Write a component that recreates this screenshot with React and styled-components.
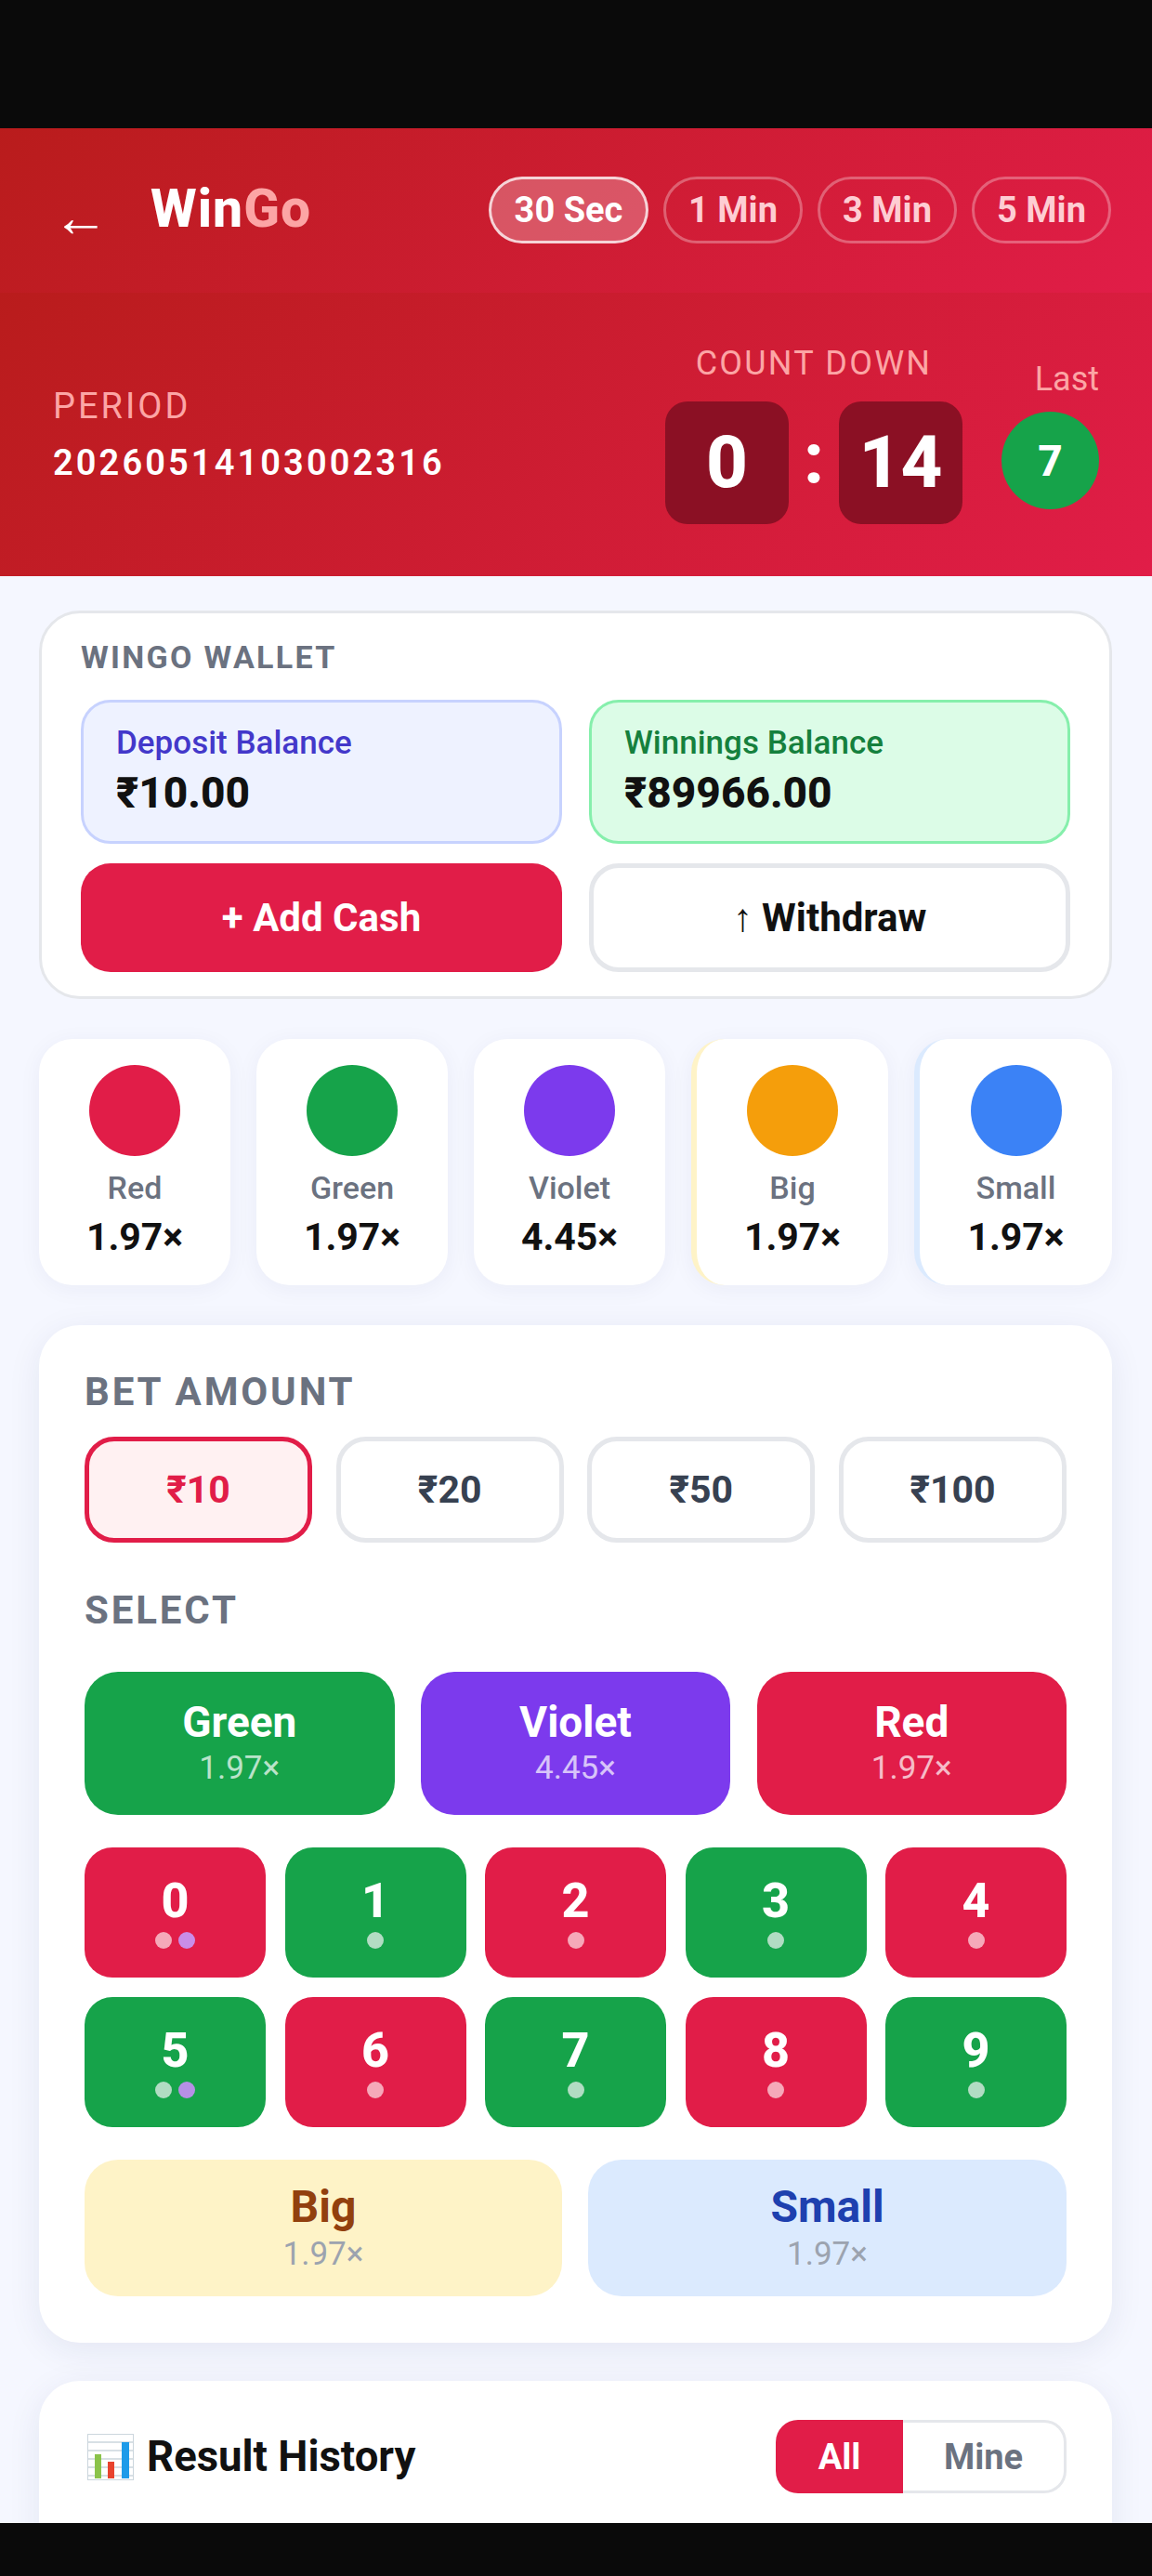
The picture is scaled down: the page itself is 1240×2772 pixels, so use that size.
import React from 'react';
import styled, { createGlobalStyle } from 'styled-components';

const Global = createGlobalStyle`
    html, body {
        margin: 0;
        padding: 0;
        background: #0a0a0a;
    }
    * {
        box-sizing: border-box;
    }
    body {
        font-family: Roboto, 'Noto Sans', sans-serif;
    }
`;

const RED = '#e11d48';
const GREEN = '#16a34a';
const VIOLET = '#7c3aed';

const Screen = styled.div`
    width: 1240px;
    height: 2772px;
    display: flex;
    flex-direction: column;
    overflow: hidden;
    background: #0a0a0a;
`;
const StatusBar = styled.div`
    height: 138px;
    flex: none;
    background: #0a0a0a;
`;
const NavBar = styled.div`
    height: 57px;
    flex: none;
    background: #0a0a0a;
`;
const Page = styled.div`
    flex: 1;
    min-height: 0;
    overflow: hidden;
    background: #f5f7ff;
`;
const TopBar = styled.header`
    height: 177px;
    display: flex;
    align-items: center;
    justify-content: space-between;
    padding: 0 44px 0 57px;
    background: linear-gradient(135deg, #b91c1c, ${RED});
`;
const Brand = styled.div`
    display: flex;
    align-items: center;
    gap: 42px;
    margin-top: -4px;
`;
const Back = styled.span`
    font-family: 'Liberation Sans', sans-serif;
    font-size: 60px;
    line-height: 1;
    color: #fff;
    margin-top: 18px;
    width: 63px;
`;
const Title = styled.h1`
    margin: 0;
    font-size: 57px;
    font-weight: 800;
    letter-spacing: 1px;
    color: #fff;
    span {
        color: #fca5a5;
    }
`;
const Pills = styled.div`
    display: flex;
    gap: 16px;
    margin-top: -2px;
`;
const Pill = styled.button`
    width: ${p => (p.$active ? 172 : 150)}px;
    height: 72px;
    padding: 0;
    border-radius: 36px;
    font-family: inherit;
    font-size: 38px;
    font-weight: 700;
    color: ${p => (p.$active ? '#fff' : '#fecdd3')};
    background: ${p => (p.$active ? 'rgba(255,255,255,0.25)' : 'transparent')};
    border: 3px solid ${p => (p.$active ? 'rgba(255,255,255,0.75)' : 'rgba(255,255,255,0.3)')};
`;
const InfoRow = styled.section`
    height: 305px;
    display: flex;
    align-items: center;
    justify-content: space-between;
    padding: 0 57px;
    background: linear-gradient(135deg, #b91c1c, ${RED});
`;
const PeriodLabel = styled.div`
    font-size: 38px;
    letter-spacing: 3px;
    color: #fca5a5;
    line-height: 42px;
`;
const PeriodValue = styled.div`
    margin-top: 18px;
    font-size: 38px;
    font-weight: 600;
    letter-spacing: 3.1px;
    line-height: 44px;
    color: #fff;
`;
const RightGroup = styled.div`
    display: flex;
    align-items: center;
    gap: 42px;
`;
const CountColumn = styled.div`
    display: flex;
    flex-direction: column;
    align-items: center;
    gap: 20px;
    margin-top: -2px;
`;
const CountLabel = styled.div`
    font-size: 36px;
    letter-spacing: 2.2px;
    line-height: 42px;
    color: #fca5a5;
`;
const Digits = styled.div`
    display: flex;
    align-items: center;
    gap: 16px;
`;
const DigitBox = styled.div`
    width: 133px;
    height: 132px;
    display: flex;
    align-items: center;
    justify-content: center;
    border-radius: 24px;
    background: #8b1024;
    color: #fff;
    font-size: 78px;
    font-weight: 800;
`;
const Colon = styled.span`
    color: #fff;
    font-size: 76px;
    font-weight: 800;
    line-height: 1;
    margin-top: -10px;
`;
const LastColumn = styled.div`
    display: flex;
    flex-direction: column;
    align-items: flex-end;
    gap: 14px;
`;
const LastLabel = styled.div`
    font-size: 36px;
    line-height: 42px;
    color: #fca5a5;
`;
const LastBall = styled.div`
    width: 105px;
    height: 105px;
    border-radius: 50%;
    display: flex;
    align-items: center;
    justify-content: center;
    background: ${GREEN};
    color: #fff;
    font-size: 46px;
    font-weight: 800;
`;
const Body = styled.main`
    display: flex;
    flex-direction: column;
    gap: 43px;
    padding: 37px 43px 0 42px;
`;
const WalletCard = styled.section`
    height: 418px;
    padding: 27px 42px 0;
    background: #fff;
    border: 3px solid #e5e7eb;
    border-radius: 44px;
`;
const WalletLabel = styled.div`
    font-size: 34px;
    font-weight: 700;
    letter-spacing: 2.3px;
    line-height: 40px;
    color: #6b7280;
`;
const TwoCols = styled.div`
    display: grid;
    grid-template-columns: 518px 518px;
    column-gap: 29px;
    margin-top: ${p => p.$top}px;
`;
const Balance = styled.div`
    height: 155px;
    padding: 22px 35px 0;
    border-radius: 32px;
    background: ${p => p.$bg};
    border: 3px solid ${p => p.$border};
`;
const BalanceLabel = styled.div`
    font-size: 35px;
    font-weight: 500;
    line-height: 44px;
    color: ${p => p.$color};
`;
const BalanceValue = styled.div`
    margin-top: 4px;
    font-size: 46px;
    font-weight: 800;
    line-height: 54px;
    color: #111;
`;
const WalletButton = styled.button`
    height: 117px;
    padding: 0;
    border-radius: 32px;
    font-family: inherit;
    font-size: 42px;
    font-weight: 700;
    color: ${p => (p.$primary ? '#fff' : '#111')};
    background: ${p => (p.$primary ? RED : '#fff')};
    border: ${p => (p.$primary ? 'none' : '5px solid #e5e7eb')};
`;
const Rates = styled.section`
    display: grid;
    grid-template-columns: 206px 206px 206px 212px 213px;
    column-gap: 28px;
`;
const RateCard = styled.div`
    height: 265px;
    padding-top: 28px;
    display: flex;
    flex-direction: column;
    align-items: center;
    border-radius: 36px;
    background: #fff;
    box-shadow: 0 4px 24px rgba(30, 41, 90, 0.05);
    border-left: ${p => (p.$stripe ? `6px solid ${p.$stripe}` : 'none')};
`;
const RateDot = styled.div`
    width: 98px;
    height: 98px;
    border-radius: 50%;
    background: ${p => p.$color};
`;
const RateName = styled.div`
    margin-top: 14px;
    font-size: 34px;
    font-weight: 500;
    line-height: 40px;
    color: #6b7280;
`;
const RateValue = styled.div`
    margin-top: 9px;
    font-size: 41px;
    font-weight: 700;
    line-height: 48px;
    color: #111;
`;
const BetCard = styled.section`
    height: 1095px;
    padding: 48px 49px 0;
    background: #fff;
    border-radius: 44px;
    box-shadow: 0 8px 36px rgba(30, 41, 90, 0.08);
`;
const SectionLabel = styled.div`
    font-size: 42px;
    font-weight: 700;
    letter-spacing: 2.85px;
    line-height: 48px;
    color: #6b7280;
    margin-top: ${p => p.$top || 0}px;
`;
const AmountRow = styled.div`
    display: grid;
    grid-template-columns: repeat(4, 245px);
    justify-content: space-between;
    margin-top: 24px;
`;
const Amount = styled.button`
    height: 114px;
    padding: 0;
    border-radius: 32px;
    font-family: inherit;
    font-size: 41px;
    font-weight: 700;
    color: ${p => (p.$active ? RED : '#374151')};
    background: ${p => (p.$active ? '#fff1f2' : '#fff')};
    border: 5px solid ${p => (p.$active ? RED : '#e5e7eb')};
`;
const ColorRow = styled.div`
    display: grid;
    grid-template-columns: repeat(3, 333.5px);
    justify-content: space-between;
    margin-top: 42px;
`;
const ColorButton = styled.button`
    height: 154px;
    padding: 0 0 4px;
    display: flex;
    flex-direction: column;
    align-items: center;
    justify-content: center;
    gap: 3px;
    border: none;
    border-radius: 36px;
    font-family: inherit;
    color: #fff;
    background: ${p => p.$bg};
`;
const ButtonName = styled.span`
    font-size: 46px;
    font-weight: 700;
    line-height: 54px;
`;
const ButtonRate = styled.span`
    font-size: 35px;
    line-height: 40px;
    opacity: 0.7;
`;
const NumberGrid = styled.div`
    display: grid;
    grid-template-columns: repeat(5, 195px);
    grid-auto-rows: 140px;
    justify-content: space-between;
    row-gap: 21px;
    margin-top: 35px;
`;
const NumberButton = styled.button`
    padding: 0 0 4px;
    display: flex;
    flex-direction: column;
    align-items: center;
    justify-content: center;
    gap: 3px;
    border: none;
    border-radius: 30px;
    font-family: inherit;
    color: #fff;
    background: ${p => p.$bg};
`;
const NumberText = styled.span`
    font-size: 52px;
    font-weight: 800;
    line-height: 60px;
`;
const Dots = styled.span`
    display: flex;
    gap: 7px;
`;
const Dot = styled.i`
    width: 18px;
    height: 18px;
    border-radius: 50%;
    background: ${p => p.$color};
`;
const SizeRow = styled.div`
    display: grid;
    grid-template-columns: 514px 515px;
    justify-content: space-between;
    margin-top: 35px;
`;
const SizeButton = styled.button`
    height: 147px;
    padding: 0 0 1px;
    display: flex;
    flex-direction: column;
    align-items: center;
    justify-content: center;
    gap: 4px;
    border: none;
    border-radius: 36px;
    font-family: inherit;
    background: ${p => p.$bg};
`;
const SizeName = styled.span`
    font-size: 48px;
    font-weight: 700;
    line-height: 54px;
    color: ${p => p.$color};
`;
const SizeRate = styled.span`
    font-size: 35px;
    line-height: 40px;
    color: #9ca3af;
`;
const HistoryCard = styled.section`
    height: 300px;
    margin-top: -2px;
    padding: 42px 49px 0 52px;
    display: flex;
    align-items: flex-start;
    justify-content: space-between;
    background: #fff;
    border-radius: 44px;
    box-shadow: 0 8px 36px rgba(30, 41, 90, 0.08);
`;
const HistoryTitle = styled.h2`
    margin: 0;
    height: 79px;
    display: flex;
    align-items: center;
    gap: 14px;
    font-size: 45.5px;
    font-weight: 700;
    color: #111;
`;
const Tabs = styled.div`
    display: flex;
    height: 79px;
`;
const Tab = styled.button`
    width: ${p => (p.$active ? 137 : 176)}px;
    padding: 0;
    font-family: inherit;
    font-size: 38px;
    font-weight: 700;
    color: ${p => (p.$active ? '#fff' : '#6b7280')};
    background: ${p => (p.$active ? RED : '#fff')};
    border: ${p => (p.$active ? 'none' : '3px solid #e5e7eb')};
    border-left: none;
    border-radius: ${p => (p.$active ? '24px 0 0 24px' : '0 24px 24px 0')};
`;

const ChartEmoji = () => (
    <svg width="50" height="50" viewBox="0 0 50 50">
        <rect x="0.5" y="0.5" width="49" height="49" fill="#fff" stroke="#ccd6dd" />
        <path d="M0 9h50M0 18h50M0 27h50M0 36h50M0 45h50" stroke="#ccd6dd" strokeWidth="1.5" />
        <rect x="8" y="22" width="7" height="26" fill="#8bc34a" />
        <rect x="22" y="30" width="7" height="18" fill="#e8432e" />
        <rect x="37" y="9" width="8" height="39" fill="#1e9be9" />
    </svg>
);

const rates = [
    { name: 'Red', value: '1.97×', color: RED },
    { name: 'Green', value: '1.97×', color: GREEN },
    { name: 'Violet', value: '4.45×', color: VIOLET },
    { name: 'Big', value: '1.97×', color: '#f59e0b', stripe: '#fef3c7' },
    { name: 'Small', value: '1.97×', color: '#3b82f6', stripe: '#dbeafe' },
];
const colours = [
    { name: 'Green', rate: '1.97×', bg: GREEN },
    { name: 'Violet', rate: '4.45×', bg: VIOLET },
    { name: 'Red', rate: '1.97×', bg: RED },
];
const PINK = '#f5a9b9';
const MINT = '#b2dcc3';
const numbers = [
    { n: 0, bg: RED, dots: [PINK, '#c98de8'] },
    { n: 1, bg: GREEN, dots: [MINT] },
    { n: 2, bg: RED, dots: [PINK] },
    { n: 3, bg: GREEN, dots: [MINT] },
    { n: 4, bg: RED, dots: [PINK] },
    { n: 5, bg: GREEN, dots: [MINT, '#b690e6'] },
    { n: 6, bg: RED, dots: [PINK] },
    { n: 7, bg: GREEN, dots: [MINT] },
    { n: 8, bg: RED, dots: [PINK] },
    { n: 9, bg: GREEN, dots: [MINT] },
];

const App = () => {
    return (
        <Screen>
            <Global />
            <StatusBar />
            <Page>
                <TopBar>
                    <Brand>
                        <Back>←</Back>
                        <Title>
                            Win<span>Go</span>
                        </Title>
                    </Brand>
                    <Pills>
                        <Pill $active>30 Sec</Pill>
                        <Pill>1 Min</Pill>
                        <Pill>3 Min</Pill>
                        <Pill>5 Min</Pill>
                    </Pills>
                </TopBar>
                <InfoRow>
                    <div>
                        <PeriodLabel>PERIOD</PeriodLabel>
                        <PeriodValue>20260514103002316</PeriodValue>
                    </div>
                    <RightGroup>
                        <CountColumn>
                            <CountLabel>COUNT DOWN</CountLabel>
                            <Digits>
                                <DigitBox>0</DigitBox>
                                <Colon>:</Colon>
                                <DigitBox>14</DigitBox>
                            </Digits>
                        </CountColumn>
                        <LastColumn>
                            <LastLabel>Last</LastLabel>
                            <LastBall>7</LastBall>
                        </LastColumn>
                    </RightGroup>
                </InfoRow>
                <Body>
                    <WalletCard>
                        <WalletLabel>WINGO WALLET</WalletLabel>
                        <TwoCols $top={26}>
                            <Balance $bg="#eef2ff" $border="#c7d2fe">
                                <BalanceLabel $color="#4338ca">Deposit Balance</BalanceLabel>
                                <BalanceValue>₹10.00</BalanceValue>
                            </Balance>
                            <Balance $bg="#dcfce7" $border="#86efac">
                                <BalanceLabel $color="#15803d">Winnings Balance</BalanceLabel>
                                <BalanceValue>₹89966.00</BalanceValue>
                            </Balance>
                        </TwoCols>
                        <TwoCols $top={21}>
                            <WalletButton $primary>+ Add Cash</WalletButton>
                            <WalletButton>↑ Withdraw</WalletButton>
                        </TwoCols>
                    </WalletCard>
                    <Rates>
                        {rates.map(r => (
                            <RateCard key={r.name} $stripe={r.stripe}>
                                <RateDot $color={r.color} />
                                <RateName>{r.name}</RateName>
                                <RateValue>{r.value}</RateValue>
                            </RateCard>
                        ))}
                    </Rates>
                    <BetCard>
                        <SectionLabel>BET AMOUNT</SectionLabel>
                        <AmountRow>
                            <Amount $active>₹10</Amount>
                            <Amount>₹20</Amount>
                            <Amount>₹50</Amount>
                            <Amount>₹100</Amount>
                        </AmountRow>
                        <SectionLabel $top={49}>SELECT</SectionLabel>
                        <ColorRow>
                            {colours.map(c => (
                                <ColorButton key={c.name} $bg={c.bg}>
                                    <ButtonName>{c.name}</ButtonName>
                                    <ButtonRate>{c.rate}</ButtonRate>
                                </ColorButton>
                            ))}
                        </ColorRow>
                        <NumberGrid>
                            {numbers.map(item => (
                                <NumberButton key={item.n} $bg={item.bg}>
                                    <NumberText>{item.n}</NumberText>
                                    <Dots>
                                        {item.dots.map(d => (
                                            <Dot key={d} $color={d} />
                                        ))}
                                    </Dots>
                                </NumberButton>
                            ))}
                        </NumberGrid>
                        <SizeRow>
                            <SizeButton $bg="#fef3c7">
                                <SizeName $color="#92400e">Big</SizeName>
                                <SizeRate>1.97×</SizeRate>
                            </SizeButton>
                            <SizeButton $bg="#dbeafe">
                                <SizeName $color="#1e40af">Small</SizeName>
                                <SizeRate>1.97×</SizeRate>
                            </SizeButton>
                        </SizeRow>
                    </BetCard>
                    <HistoryCard>
                        <HistoryTitle>
                            <ChartEmoji />
                            Result History
                        </HistoryTitle>
                        <Tabs>
                            <Tab $active>All</Tab>
                            <Tab>Mine</Tab>
                        </Tabs>
                    </HistoryCard>
                </Body>
            </Page>
            <NavBar />
        </Screen>
    );
};

export default App;
